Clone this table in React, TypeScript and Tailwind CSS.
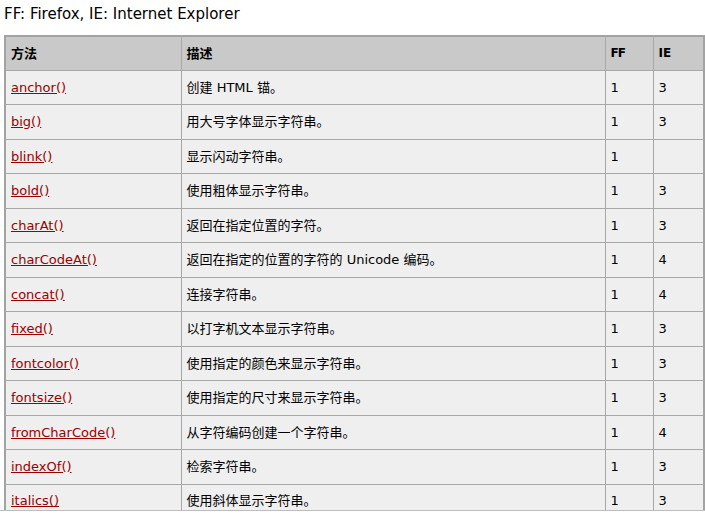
const rows: [string, string, string, string][] = [
  ['anchor()', '创建 HTML 锚。', '1', '3'],
  ['big()', '用大号字体显示字符串。', '1', '3'],
  ['blink()', '显示闪动字符串。', '1', ''],
  ['bold()', '使用粗体显示字符串。', '1', '3'],
  ['charAt()', '返回在指定位置的字符。', '1', '3'],
  ['charCodeAt()', '返回在指定的位置的字符的 Unicode 编码。', '1', '4'],
  ['concat()', '连接字符串。', '1', '4'],
  ['fixed()', '以打字机文本显示字符串。', '1', '3'],
  ['fontcolor()', '使用指定的颜色来显示字符串。', '1', '3'],
  ['fontsize()', '使用指定的尺寸来显示字符串。', '1', '3'],
  ['fromCharCode()', '从字符编码创建一个字符串。', '1', '4'],
  ['indexOf()', '检索字符串。', '1', '3'],
  ['italics()', '使用斜体显示字符串。', '1', '3'],
]

export default function App() {
  return (
    <div
      className="h-[511px] w-[705px] overflow-hidden border-b border-[#bdbdbd] bg-white text-black"
      style={{ fontFamily: '"DejaVu Sans", "Noto Sans CJK SC", sans-serif' }}
    >
      <p className="h-[35px] pl-[4px] pt-[4px] text-[15px] leading-[20px]">
        FF: Firefox, IE: Internet Explorer
      </p>

      <table className="ml-[4px] w-[699px] table-fixed border-collapse border-2 border-[#a3a3a3]">
        <colgroup>
          <col className="w-[176px]" />
          <col className="w-[424px]" />
          <col className="w-[48px]" />
          <col className="w-[51px]" />
        </colgroup>
        <thead>
          <tr className="h-[34px] bg-[#c9c9c9] text-left text-[12px] font-bold">
            <th className="border border-[#a8a8a8] pl-[5px] text-[13px]">方法</th>
            <th className="border border-[#a8a8a8] pl-[5px] text-[13px]">描述</th>
            <th className="border border-[#a8a8a8] pl-[5px] tracking-[-1px]">FF</th>
            <th className="border border-[#a8a8a8] pl-[5px]">IE</th>
          </tr>
        </thead>
        <tbody>
          {rows.map(([name, desc, ff, ie]) => (
            <tr key={name} className="h-[34.5px] bg-[#efefef] text-[13px]">
              <td className="border border-[#a8a8a8] pl-[5px]">
                <a href="#" className="text-[#990000] underline">
                  {name}
                </a>
              </td>
              <td className="border border-[#a8a8a8] pl-[5px]">{desc}</td>
              <td className="border border-[#a8a8a8] pl-[5px]">{ff}</td>
              <td className="border border-[#a8a8a8] pl-[5px]">{ie}</td>
            </tr>
          ))}
        </tbody>
      </table>
    </div>
  )
}
